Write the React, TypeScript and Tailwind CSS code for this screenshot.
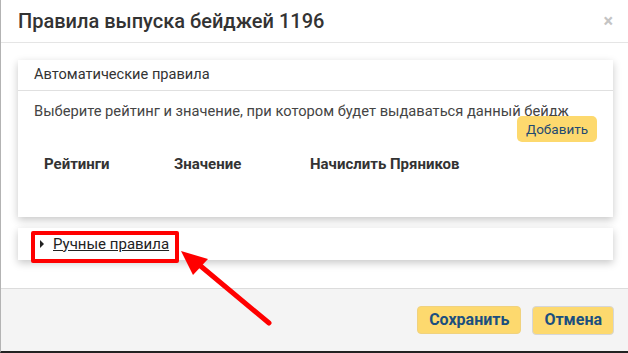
import React from 'react';

const RedArrow: React.FC = () => (
  <svg className="absolute left-0 top-0 pointer-events-none" width="628" height="353" viewBox="0 0 628 353">
    <line x1="268" y1="323" x2="196" y2="263" stroke="#f00" strokeWidth="5" strokeLinecap="round" />
    <polygon points="180,251 207,259 192,275" fill="#f00" />
  </svg>
);

export default function App() {
  return (
    <div className="relative w-[628px] h-[353px] flex flex-col bg-white border-l border-[#b3b3b3] border-b-2 border-b-[#222] overflow-hidden font-['Roboto',sans-serif]">
      {/* Header */}
      <div className="h-[43px] shrink-0 flex items-center justify-between pl-[17px] pr-[15px] border-b border-[#e5e5e5]">
        <h1 className="text-[20px] font-medium text-[#333] leading-none">Правила выпуска бейджей 1196</h1>
        <span className="text-[18px] font-bold text-[#c4c4c4] leading-none">×</span>
      </div>

      {/* Body */}
      <div className="flex-1 flex flex-col gap-[11px] pl-[17px] pr-[15px] pt-[17px]">
        <div className="h-[157px] bg-white shadow-[0_3px_8px_rgba(0,0,0,0.22)] flex flex-col">
          <div className="h-[31px] flex items-center px-[16px] border-b border-[#e0e0e0] text-[14.6px] text-[#333]">
            Автоматические правила
          </div>
          <div className="px-[16px] pt-[10px] text-[14.7px] text-[#444] leading-[20px] whitespace-nowrap">
            Выберите рейтинг и значение, при котором будет выдаваться данный бейдж
          </div>
          <div className="flex justify-end pr-[16px] -mt-[5px]">
            <button className="h-[26px] px-[9px] rounded-[5px] bg-[#fdd96e] text-[13.5px] text-[#1f4a72]">Добавить</button>
          </div>
          <div className="flex items-center pl-[26px] mt-[11px] text-[15px] font-bold text-[#333]">
            <span className="w-[130px]">Рейтинги</span>
            <span className="w-[136px]">Значение</span>
            <span>Начислить Пряников</span>
          </div>
        </div>

        <div className="h-[32px] bg-white shadow-[0_3px_8px_rgba(0,0,0,0.22)] flex items-center pl-[22px] text-[15px] text-[#222]">
          <span className="w-0 h-0 border-y-[4px] border-y-transparent border-l-[4px] border-l-[#222] mr-[9px]" />
          <span className="underline">Ручные правила</span>
        </div>
      </div>

      {/* Footer */}
      <div className="h-[63px] shrink-0 flex items-center justify-end gap-[11px] pr-[14px] bg-[#f4f4f4] border-t border-[#dcdcdc]">
        <button className="h-[28px] px-[11px] rounded-[4px] bg-[#fdd96e] border border-[#f0d27e] text-[16px] font-bold text-[#1b4f7f]">Сохранить</button>
        <button className="h-[29px] px-[11px] rounded-[4px] bg-[#fdd96e] border border-[#d6d6d6] text-[16px] font-bold text-[#1b4f7f]">Отмена</button>
      </div>

      {/* annotation */}
      <div className="absolute left-[30px] top-[231px] w-[148px] h-[32px] border-4 border-[#f00] rounded-[2px] pointer-events-none" />
      <RedArrow />
    </div>
  );
}
